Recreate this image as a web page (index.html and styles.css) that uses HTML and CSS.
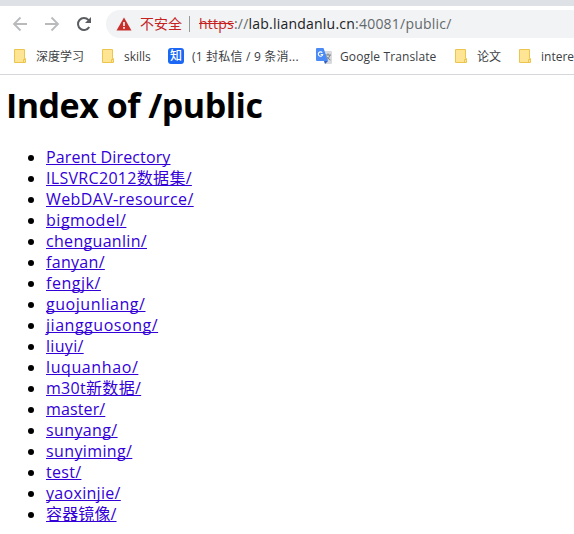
FILE: index.html
```html
<!DOCTYPE html>
<html lang="zh-CN">
<head>
<meta charset="utf-8">
<title>Index of /public</title>
<link rel="stylesheet" href="styles.css">
</head>
<body>
<header class="browser">
  <div class="tabstrip"></div>
  <div class="toolbar">
    <svg class="nav" viewBox="0 0 16 16"><path d="M15 8H2.500M8.500 1.500L2 8l6.500 6.500" /></svg>
    <svg class="nav forward" viewBox="0 0 16 16"><path d="M1 8h12.500M7.500 1.500L14 8l-6.500 6.500" /></svg>
    <svg class="nav reload" viewBox="0 0 16 16"><path d="M13.200 11A6 6 0 1 1 12.400 3.900L14 5.500" /><path class="tip" d="M15 1v6H9z" /></svg>
    <div class="omnibox">
      <svg class="warning" viewBox="0 0 16 14"><path class="triangle" d="M8 .5L15.500 13.500H.5z" /><path class="mark" d="M7.200 5h1.600v4H7.200zM7.200 10h1.600v1.700H7.200z" /></svg>
      <span class="insecure">不安全</span>
      <span class="divider"></span>
      <span class="url"><span class="scheme">https</span>://<span class="host">lab.liandanlu.cn</span>:40081/public/</span>
    </div>
  </div>
  <nav class="bookmarks">
    <span class="bookmark deep"><svg class="folder" viewBox="0 0 12 14"><path d="M.5.5h10v9h1v4H.5z"/><path d="M9.500 13.500v-3h2"/></svg><span>深度学习</span></span>
    <span class="bookmark skills"><svg class="folder" viewBox="0 0 12 14"><path d="M.5.5h10v9h1v4H.5z"/><path d="M9.500 13.500v-3h2"/></svg><span>skills</span></span>
    <span class="bookmark messages"><span class="zhihu">知</span><span class="message-text">(1 封私信 / 9 条消...</span></span>
    <span class="bookmark translate"><svg class="gt" viewBox="0 0 16 16"><path class="page" d="M6 3h9q1 0 1 1v11q0 1-1 1H9z"/><path class="glyph" d="M9 7h6M12 5.500V7M14 7q-1 4-4 5M10.500 8.500q1 2 4 3.500"/><path class="blue" d="M1 0h6.500L12 13H1q-1 0-1-1V1q0-1 1-1z"/><path class="fold" d="M8 13h4l-3 3z"/><path class="g" d="M6.300 4.700A2.200 2.200 0 1 0 6.700 6.500H4.700"/></svg><span class="translate-text">Google Translate</span></span>
    <span class="bookmark papers"><svg class="folder" viewBox="0 0 12 14"><path d="M.5.5h10v9h1v4H.5z"/><path d="M9.500 13.500v-3h2"/></svg><span>论文</span></span>
    <span class="bookmark interest"><svg class="folder" viewBox="0 0 12 14"><path d="M.5.5h10v9h1v4H.5z"/><path d="M9.500 13.500v-3h2"/></svg><span>intere</span></span>
  </nav>
</header>
<main>
  <h1>Index of /public</h1>
  <ul>
    <li class="track-1"><a href="#">Parent Directory</a></li>
    <li class="track-3"><a href="#">ILSVRC2012数据集/</a></li>
    <li class="track-4"><a href="#">WebDAV-resource/</a></li>
    <li class="track-5"><a href="#">bigmodel/</a></li>
    <li class="track-3"><a href="#">chenguanlin/</a></li>
    <li class="track-3"><a href="#">fanyan/</a></li>
    <li class="track-5"><a href="#">fengjk/</a></li>
    <li class="track-5"><a href="#">guojunliang/</a></li>
    <li class="track-5"><a href="#">jiangguosong/</a></li>
    <li class="track-3"><a href="#">liuyi/</a></li>
    <li class="track-6"><a href="#">luquanhao/</a></li>
    <li class="track-3"><a href="#">m30t新数据/</a></li>
    <li class="track-1"><a href="#">master/</a></li>
    <li class="track-4"><a href="#">sunyang/</a></li>
    <li class="track-4"><a href="#">sunyiming/</a></li>
    <li class="track-3"><a href="#">test/</a></li>
    <li class="track-3"><a href="#">yaoxinjie/</a></li>
    <li class="track-1"><a href="#">容器镜像/</a></li>
  </ul>
</main>
</body>
</html>
```
FILE: styles.css
```css
* { box-sizing: border-box; }
body {
  margin: 0;
  height: 534px;
  overflow: hidden;
  background: #fff;
  color: #000;
  font-family: "Open Sans", "Noto Sans CJK SC", sans-serif;
}
svg { display: block; flex: none; fill: none; }
.browser { height: 75px; border-bottom: 1px solid #d5d7da; overflow: hidden; }
.tabstrip { height: 6px; background: #dee1e6; }
.toolbar { display: flex; align-items: center; height: 36px; padding: 4px 0 4px 12px; }
.nav { width: 16px; height: 16px; stroke: #b9babc; stroke-width: 1.8; }
.forward { margin-left: 16px; }
.reload { margin-left: 16px; stroke: #5a5d61; stroke-width: 2; }
.tip { fill: #5a5d61; stroke: none; }
.omnibox {
  display: flex;
  align-items: center;
  flex: 1;
  height: 28px;
  margin-left: 14px;
  padding-left: 10px;
  border-radius: 14px 0 0 14px;
  background: #f1f3f4;
  font-size: 14px;
  line-height: 20px;
  white-space: nowrap;
}
.warning { width: 16px; height: 14px; }
.triangle { fill: #c9302c; }
.mark { fill: #fff; }
.insecure { width: 42px; margin-left: 8px; color: #c5221f; }
.divider { width: 1px; height: 16px; margin: 0 9px 0 7px; background: #97999c; }
.url { color: #64686c; letter-spacing: .22px; }
.scheme { color: #c5221f; text-decoration: line-through; }
.host { color: #202124; }
.bookmarks { display: flex; align-items: center; height: 28px; padding-left: 14px; white-space: nowrap; font-size: 12px; line-height: 20px; color: #3c4043; }
.bookmark { display: flex; align-items: center; flex: none; }
.bookmark > span:last-child { margin-top: 2px; }
.message-text { letter-spacing: .2px; }
.translate-text { letter-spacing: .12px; }
.folder { width: 12px; height: 14px; margin-right: 10px; fill: #fee593; stroke: #ecc44f; }
.deep { width: 88px; }
.skills { width: 66px; }
.messages { width: 148px; }
.translate { width: 139px; }
.papers { width: 64px; }
.zhihu { width: 16px; height: 16px; margin-right: 8px; border-radius: 3px; background: #1c68f5; color: #fff; font-size: 12px; font-weight: 500; line-height: 15px; text-align: center; }
.gt { width: 16px; height: 16px; margin-right: 8px; }
.page { fill: #d8dadd; }
.glyph { stroke: #7b858d; }
.blue { fill: #4c8bf5; }
.fold { fill: #315bbd; }
.g { stroke: #fff; stroke-width: 1.1; }
main { padding: 6px 6px 0; }
h1 { height: 48px; margin: 0; font-size: 34px; font-weight: 700; line-height: 48px; letter-spacing: -.5px; white-space: nowrap; }
ul { margin: 18px 0 0; padding-left: 40px; font-size: 16px; line-height: 21px; }
li { height: 21px; white-space: nowrap; }
.track-1 { letter-spacing: .13px; }
.track-3 { letter-spacing: .31px; }
.track-4 { letter-spacing: .38px; }
.track-5 { letter-spacing: .53px; }
.track-6 { letter-spacing: .6px; }
a { color: #3300d8; text-decoration: underline; text-decoration-thickness: 1px; text-underline-offset: 1px; text-decoration-skip-ink: none; }
```
